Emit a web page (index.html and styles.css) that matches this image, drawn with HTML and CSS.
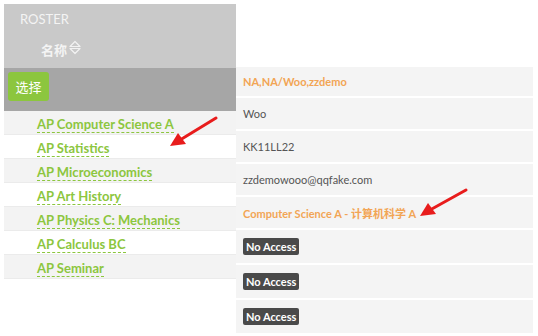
FILE: index.html
```html
<!DOCTYPE html>
<html lang="zh-cn">
<head>
  <meta charset="UTF-8">
  <meta name="viewport" content="width=device-width, initial-scale=1.0">
  <title>Roster</title>
  <link rel="stylesheet" href="styles.css">
</head>
<body>

  <div class="page">
    <div class="roster">
      <div class="roster-head">
        <div class="roster-title">ROSTER</div>
        <div class="roster-col">名称
          <svg class="sort" width="12" height="15" viewBox="0 0 12 15">
            <path d="M1 6.5 L6 1.5 L11 6.5 Z M1 8.5 L6 13.5 L11 8.5 Z" fill="none" stroke="#f2f2f2" stroke-width="1.2" stroke-linejoin="round"/>
          </svg>
        </div>
      </div>
      <div class="roster-bar">
        <button class="pick">选择</button>
      </div>
      <ul class="courses">
        <li><a href="#">AP Computer Science A</a></li>
        <li><a href="#">AP Statistics</a></li>
        <li><a href="#">AP Microeconomics</a></li>
        <li><a href="#">AP Art History</a></li>
        <li><a href="#">AP Physics C: Mechanics</a></li>
        <li><a href="#">AP Calculus BC</a></li>
        <li><a href="#">AP Seminar</a></li>
      </ul>
    </div>

    <div class="details">
      <div class="cell name">NA,NA/Woo,zzdemo</div>
      <div class="cell">Woo</div>
      <div class="cell">KK11LL22</div>
      <div class="cell">zzdemowooo@qqfake.com</div>
      <div class="cell name">Computer Science A - 计算机科学 A</div>
      <div class="cell tall"><span class="badge">No Access</span></div>
      <div class="cell tall"><span class="badge">No Access</span></div>
      <div class="cell tall"><span class="badge">No Access</span></div>
    </div>
  </div>

  <!-- arrows drawn over the screenshot -->
  <svg class="arrow arrow-one" width="60" height="40" viewBox="0 0 60 40">
    <line x1="50" y1="4" x2="14" y2="26" stroke="#e81c1c" stroke-width="3" stroke-linecap="round"/>
    <path d="M4 32 L12 19 L20 30 Z" fill="#e81c1c"/>
  </svg>
  <svg class="arrow arrow-two" width="60" height="40" viewBox="0 0 60 40">
    <line x1="50" y1="4" x2="14" y2="24" stroke="#e81c1c" stroke-width="3" stroke-linecap="round"/>
    <path d="M4 30 L12 17 L20 28 Z" fill="#e81c1c"/>
  </svg>

</body>
</html>
```

FILE: styles.css
```css
body {
  margin: 0;
  padding: 4px;
  font-family: Lato, 'Noto Sans CJK SC', sans-serif;
  background: #ffffff;
}
.page {
  display: flex;
  align-items: flex-start;
}
.roster {
  width: 232px;
  flex: none;
}
.roster-head {
  background: #c9c9c9;
  height: 64px;
  box-sizing: border-box;
  padding: 8px 0 0 16px;
  color: #f4f4f4;
}
.roster-title {
  font-size: 13px;
  line-height: 15px;
}
.roster-col {
  margin: 16px 0 0 21px;
  font-size: 13px;
  font-weight: bold;
  line-height: 15px;
  display: flex;
  align-items: center;
  gap: 2px;
}
.sort {
  margin-top: -6px;
}
.roster-bar {
  background: #a6a6a6;
  height: 43px;
  padding: 4px;
  box-sizing: border-box;
}
.pick {
  background: #8cc63e;
  color: #ffffff;
  border: none;
  border-radius: 3px;
  font-family: inherit;
  font-size: 13px;
  width: 41px;
  height: 29px;
  padding: 0;
}
.courses {
  list-style: none;
  margin: 0;
  padding: 0;
}
.courses li {
  height: 24px;
  box-sizing: border-box;
  padding: 2px 0 0 33px;
  border-bottom: 1px solid #ebebeb;
}
.courses li:nth-child(odd) {
  background: #f3f3f3;
}
.courses a {
  color: #8cc63e;
  font-weight: bold;
  font-size: 13px;
  line-height: 16px;
  text-decoration: none;
  border-bottom: 1px dashed #8cc63e;
}
.details {
  margin-top: 63px;
  width: 297px;
  display: flex;
  flex-direction: column;
  gap: 2px;
}
.cell {
  background: #f4f4f4;
  height: 31px;
  box-sizing: border-box;
  padding: 0 7px;
  display: flex;
  align-items: center;
  font-size: 11px;
  color: #555555;
}
.cell:first-child {
  height: 29px;
}
.cell.tall {
  height: 33px;
}
.cell.name {
  color: #f2a555;
  font-weight: bold;
}
.badge {
  background: #4a4a4a;
  color: #ffffff;
  font-weight: bold;
  font-size: 11px;
  padding: 2px 3px;
  border-radius: 2px;
}
.arrow {
  position: absolute;
}
.arrow-one {
  left: 166px;
  top: 114px;
}
.arrow-two {
  left: 416px;
  top: 186px;
}
```
